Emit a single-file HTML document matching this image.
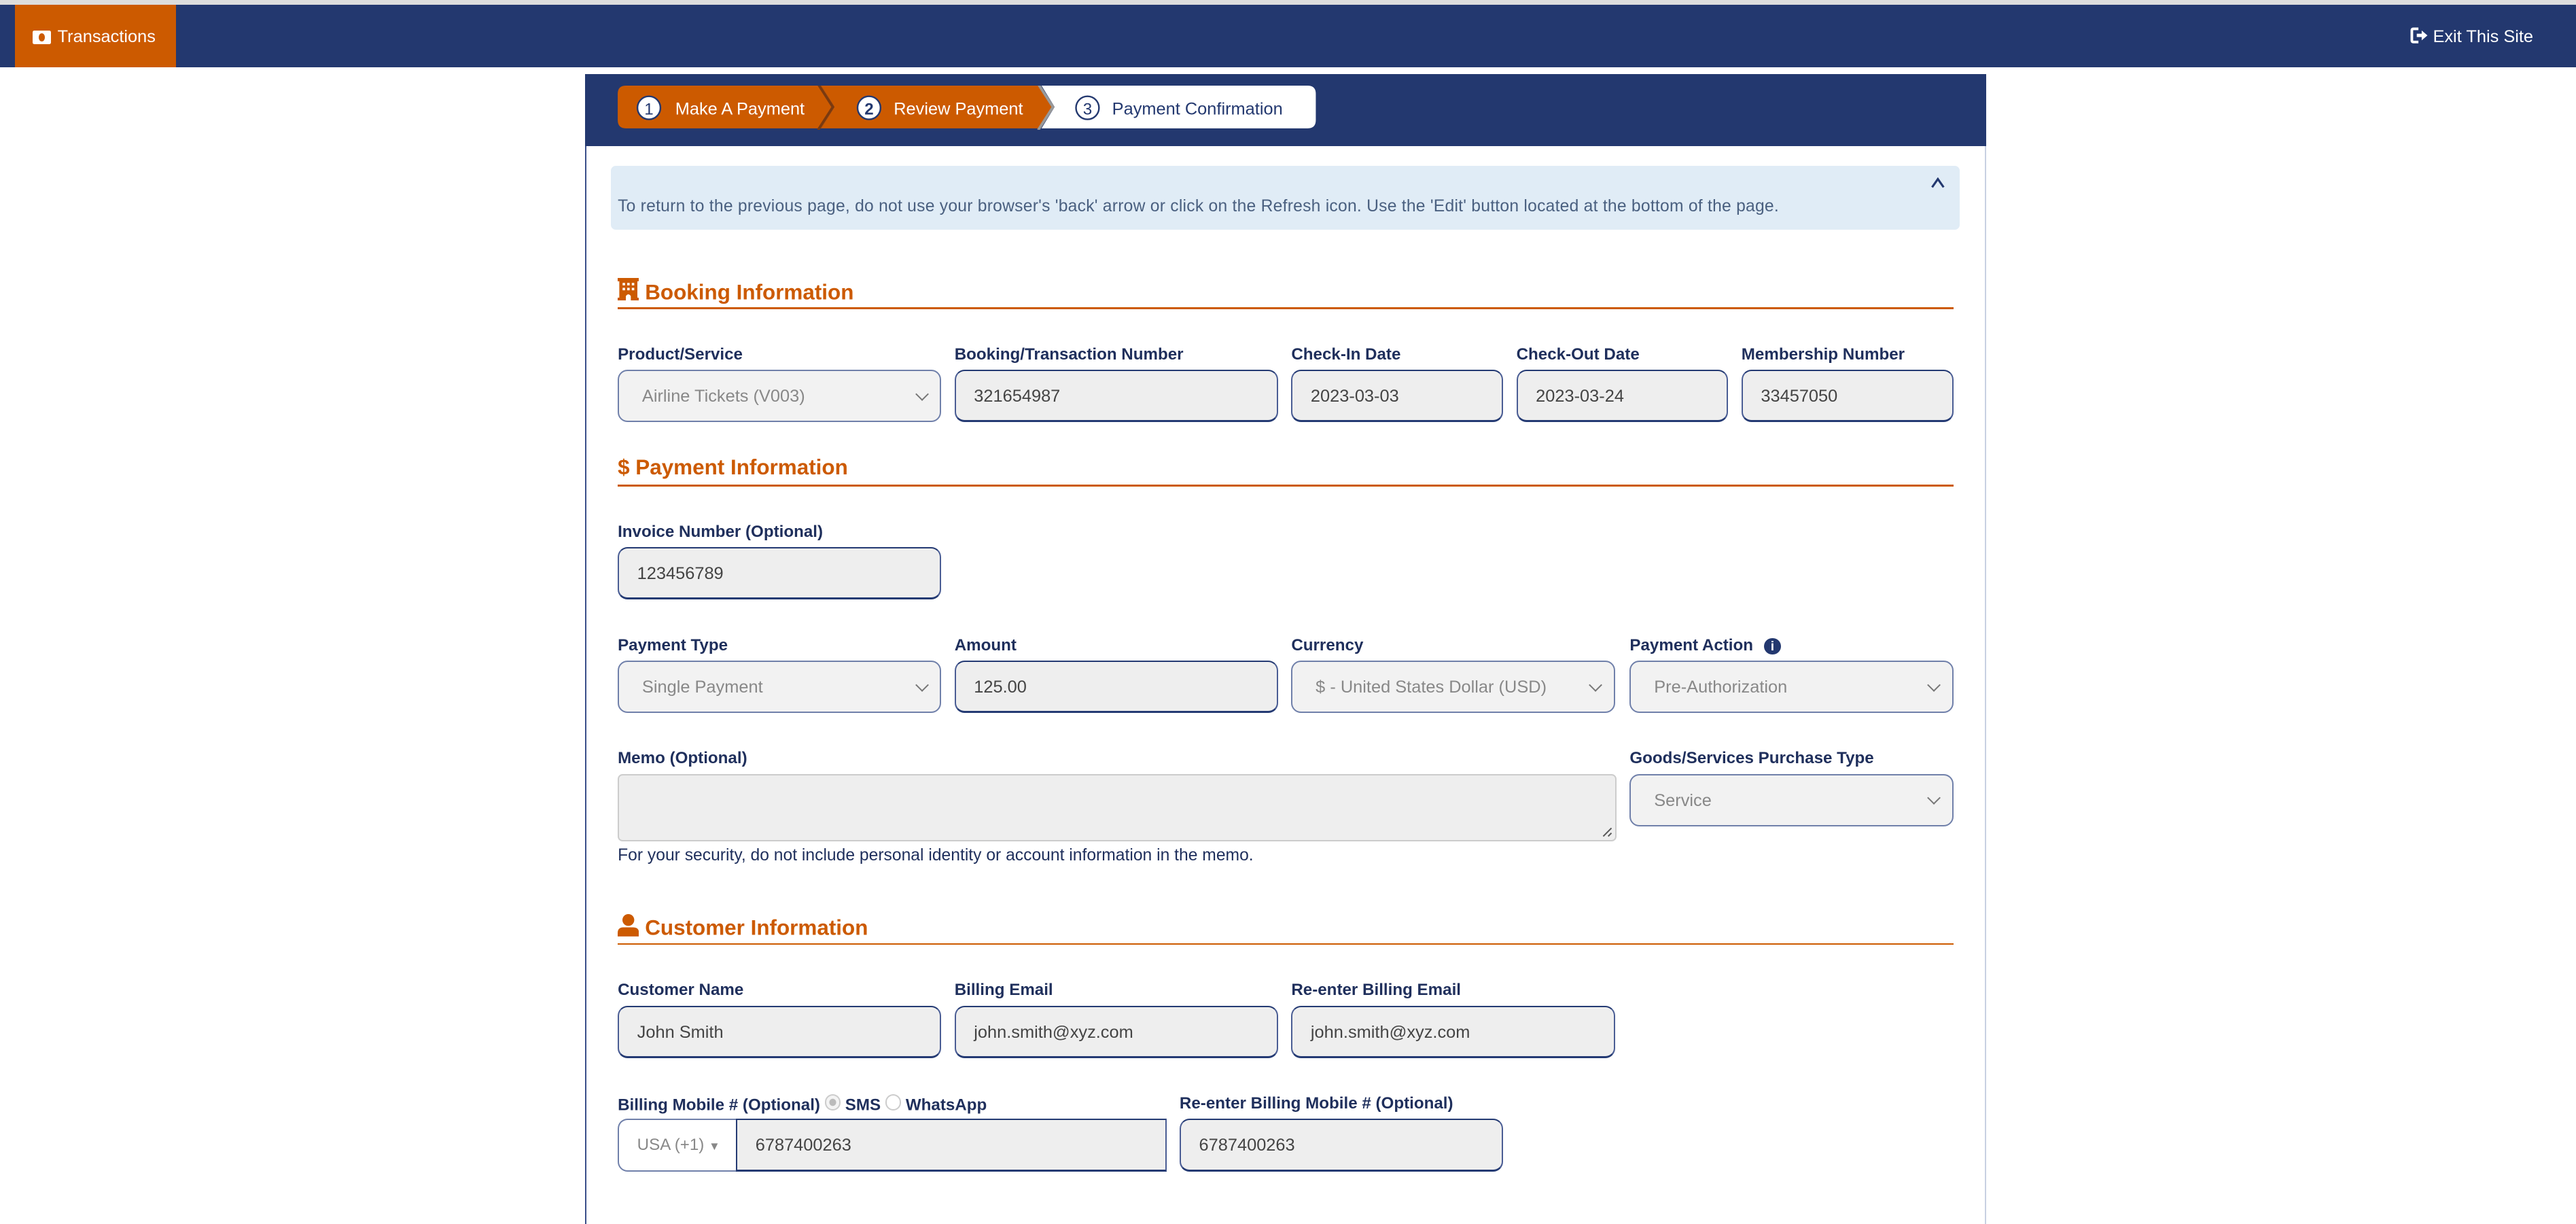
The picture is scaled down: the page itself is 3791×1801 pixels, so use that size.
<!DOCTYPE html>
<html><head><meta charset="utf-8">
<style>
html,body{margin:0;padding:0;background:#fff;}
body{width:1568px;height:727px;zoom:2.41773;position:relative;overflow:hidden;font-family:"Liberation Sans",sans-serif;}
.a{position:absolute;}
.lbl{position:absolute;font-size:10px;font-weight:bold;color:#1f2f5c;white-space:nowrap;}
.in{position:absolute;box-sizing:border-box;height:32px;border:1px solid #4a5d94;border-top:1px solid #243a73;border-bottom:1.5px solid #243a73;border-radius:6px;background:#eee;font-size:10.5px;color:#444;padding-left:11px;line-height:31px;white-space:nowrap;}
.sel{position:absolute;box-sizing:border-box;height:32px;border:1px solid #7080aa;border-radius:6px;background:#f2f2f2;font-size:10.5px;color:#888;padding-left:14px;line-height:31px;white-space:nowrap;}
.sel:after{content:"";position:absolute;right:8px;top:11px;width:5px;height:5px;border-right:1px solid #777;border-bottom:1px solid #777;transform:rotate(45deg);}
.h{position:absolute;left:376px;font-size:13px;font-weight:bold;color:#cc5a00;white-space:nowrap;}
.hl{position:absolute;left:376px;width:813px;height:1px;background:#cc5a00;}
</style></head><body>
<div class="a" style="left:0;top:0;width:1568px;height:3px;background:#ddd"></div>
<div class="a" style="left:0;top:3px;width:1568px;height:38px;background:#23386f"></div>
<div class="a" style="left:9px;top:3px;width:98px;height:38px;background:#cc5a00;color:#fff;font-size:10.5px;line-height:39px;">
 <span style="display:inline-block;width:11px;height:8px;background:#fff;border-radius:1px;margin:0 4px 0 11px;vertical-align:-1px;position:relative"><span style="position:absolute;left:3.5px;top:1.5px;width:4px;height:5px;border-radius:50%;background:#cc5a00"></span></span>Transactions</div>
<div class="a" style="left:1467px;top:3px;height:38px;line-height:39px;color:#fff;font-size:10.5px;">
 <svg width="11" height="10" viewBox="0 0 11 10" style="vertical-align:-1px"><path d="M5 1H2Q1 1 1 2V8Q1 9 2 9H5" fill="none" stroke="#fff" stroke-width="1.6"/><path d="M4 4H7V2L10.5 5L7 8V6H4Z" fill="#fff"/></svg> Exit This Site</div>

<div class="a" style="left:356px;top:45px;width:853px;height:700px;border-left:1px solid #3a4f8a;border-right:1px solid #c8d0e2;box-sizing:border-box"></div>
<div class="a" style="left:356px;top:45px;width:853px;height:44px;background:#23386f"></div>
<svg class="a" style="left:376px;top:52px" width="426" height="27" viewBox="0 0 426 27">
 <path d="M258 0H420Q425 0 425 5V21Q425 26 420 26H258L266 13Z" fill="#fff"/>
 <path d="M5 0H124L132 13L124 26H5Q0 26 0 21V5Q0 0 5 0Z" fill="#cc5a00"/>
 <path d="M124 0H257L265 13L257 26H124L132 13Z" fill="#cc5a00"/>
 <path d="M122 -1L131 13L122 27" fill="none" stroke="#7a3a10" stroke-width="1.6"/>
 <path d="M256 -1L265 13L256 27" fill="none" stroke="#999" stroke-width="1.6"/>
 <circle cx="19" cy="13.5" r="7" fill="#fff" stroke="#23386f" stroke-width="1"/>
 <circle cx="153" cy="13.5" r="7" fill="#fff" stroke="#23386f" stroke-width="1"/>
 <circle cx="286" cy="13.5" r="7" fill="#fff" stroke="#23386f" stroke-width="1"/>
 <text x="19" y="17.5" text-anchor="middle" font-family="Liberation Sans" font-size="10" fill="#23386f">1</text>
 <text x="153" y="17.5" text-anchor="middle" font-family="Liberation Sans" font-size="10" font-weight="bold" fill="#23386f">2</text>
 <text x="286" y="17.5" text-anchor="middle" font-family="Liberation Sans" font-size="10" fill="#23386f">3</text>
 <text x="35" y="17.5" font-family="Liberation Sans" font-size="10.5" fill="#fff">Make A Payment</text>
 <text x="168" y="17.5" font-family="Liberation Sans" font-size="10.5" fill="#fff">Review Payment</text>
 <text x="301" y="17.5" font-family="Liberation Sans" font-size="10.5" fill="#23386f">Payment Confirmation</text>
</svg>

<div class="a" style="left:372px;top:101px;width:821px;height:39px;background:#e0ecf6;border-radius:3px;"></div>
<div class="a" style="left:376px;top:120px;font-size:10.2px;letter-spacing:0.1px;color:#4a6080;white-space:nowrap">To return to the previous page, do not use your browser's 'back' arrow or click on the Refresh icon. Use the 'Edit' button located at the bottom of the page.</div>
<svg class="a" style="left:1175px;top:108px" width="9" height="7"><path d="M1 6L4.5 1L8 6" fill="none" stroke="#23386f" stroke-width="1.3"/></svg>

<div class="h" style="top:169px"><svg width="13" height="14" viewBox="0 0 13 14" style="vertical-align:-1px"><path d="M0 0H13V2H12V12H13V14H8V11Q6.5 9 5 11V14H0V12H1V2H0Z" fill="#cc5a00"/><g fill="#fff"><rect x="3" y="3" width="1.5" height="1.5"/><rect x="5.8" y="3" width="1.5" height="1.5"/><rect x="8.6" y="3" width="1.5" height="1.5"/><rect x="3" y="6" width="1.5" height="1.5"/><rect x="5.8" y="6" width="1.5" height="1.5"/><rect x="8.6" y="6" width="1.5" height="1.5"/></g></svg> Booking Information</div>
<div class="hl" style="top:187px"></div>

<div class="lbl" style="left:376px;top:210px">Product/Service</div>
<div class="lbl" style="left:581px;top:210px">Booking/Transaction Number</div>
<div class="lbl" style="left:786px;top:210px">Check-In Date</div>
<div class="lbl" style="left:923px;top:210px">Check-Out Date</div>
<div class="lbl" style="left:1060px;top:210px">Membership Number</div>
<div class="sel" style="left:376px;top:225px;width:197px">Airline Tickets (V003)</div>
<div class="in" style="left:581px;top:225px;width:197px">321654987</div>
<div class="in" style="left:786px;top:225px;width:129px">2023-03-03</div>
<div class="in" style="left:923px;top:225px;width:129px">2023-03-24</div>
<div class="in" style="left:1060px;top:225px;width:129px">33457050</div>

<div class="h" style="top:277px">$ Payment Information</div>
<div class="hl" style="top:295px"></div>
<div class="lbl" style="left:376px;top:318px">Invoice Number (Optional)</div>
<div class="in" style="left:376px;top:333px;width:197px">123456789</div>

<div class="lbl" style="left:376px;top:387px">Payment Type</div>
<div class="lbl" style="left:581px;top:387px">Amount</div>
<div class="lbl" style="left:786px;top:387px">Currency</div>
<div class="lbl" style="left:992px;top:387px">Payment Action <span style="display:inline-block;width:10px;height:10px;border-radius:50%;background:#23386f;color:#fff;font-size:8px;text-align:center;line-height:10px;margin-left:4px;vertical-align:0">i</span></div>
<div class="sel" style="left:376px;top:402px;width:197px">Single Payment</div>
<div class="in" style="left:581px;top:402px;width:197px">125.00</div>
<div class="sel" style="left:786px;top:402px;width:197px">$ - United States Dollar (USD)</div>
<div class="sel" style="left:992px;top:402px;width:197px">Pre-Authorization</div>

<div class="lbl" style="left:376px;top:456px">Memo (Optional)</div>
<div class="lbl" style="left:992px;top:456px">Goods/Services Purchase Type</div>
<div class="a" style="left:376px;top:471px;width:608px;height:41px;box-sizing:border-box;background:#eee;border:1px solid #ccc;border-radius:3px"></div>
<svg class="a" style="left:975px;top:503px" width="7" height="7"><path d="M1 6L6 1M4 6L6 4" stroke="#555" stroke-width="0.8"/></svg>
<div class="sel" style="left:992px;top:471px;width:197px">Service</div>
<div class="a" style="left:376px;top:515px;font-size:10.2px;color:#1f2f5c;white-space:nowrap">For your security, do not include personal identity or account information in the memo.</div>

<div class="h" style="top:556px"><svg width="13" height="14" viewBox="0 0 13 14" style="vertical-align:-1px"><circle cx="6.5" cy="4" r="3.6" fill="#cc5a00"/><path d="M0 14V12Q0 8.5 3.5 8.5H9.5Q13 8.5 13 12V14Z" fill="#cc5a00"/></svg> Customer Information</div>
<div class="hl" style="top:574px"></div>

<div class="lbl" style="left:376px;top:597px">Customer Name</div>
<div class="lbl" style="left:581px;top:597px">Billing Email</div>
<div class="lbl" style="left:786px;top:597px">Re-enter Billing Email</div>
<div class="in" style="left:376px;top:612px;width:197px">John Smith</div>
<div class="in" style="left:581px;top:612px;width:197px">john.smith@xyz.com</div>
<div class="in" style="left:786px;top:612px;width:197px">john.smith@xyz.com</div>

<div class="lbl" style="left:376px;top:666px">Billing Mobile # (Optional) <span style="display:inline-block;width:8px;height:8px;border-radius:50%;border:1px solid #ccc;background:radial-gradient(#bbb 35%,#f4f4f4 40%);vertical-align:0"></span> SMS <span style="display:inline-block;width:8px;height:8px;border-radius:50%;border:1px solid #ccc;vertical-align:0"></span> WhatsApp</div>
<div class="lbl" style="left:718px;top:666px">Re-enter Billing Mobile # (Optional)</div>
<div class="a" style="left:376px;top:681px;width:73px;height:32px;box-sizing:border-box;border:1px solid #7080aa;border-right:none;border-radius:6px 0 0 6px;background:#fff;font-size:10px;color:#888;line-height:31px;padding-left:11px">USA (+1) <span style="font-size:7px">&#9660;</span></div>
<div class="in" style="left:448px;top:681px;width:262px;border-radius:0;border-left:1px solid #243a73">6787400263</div>
<div class="in" style="left:718px;top:681px;width:197px">6787400263</div>
</body></html>
